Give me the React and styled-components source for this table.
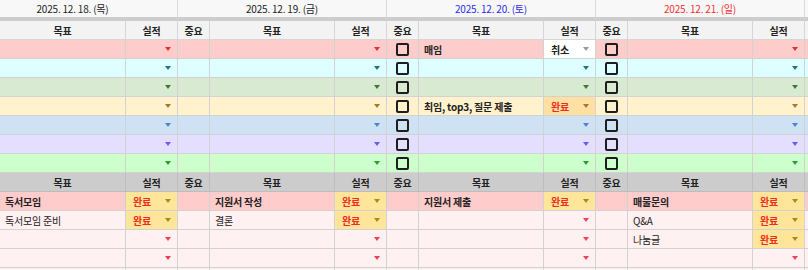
import React from 'react'
import styled, { createGlobalStyle } from 'styled-components'

const GlobalStyle = createGlobalStyle`
  html, body { margin: 0; padding: 0; background: #fff; }
  body { font-family: "Noto Sans CJK KR", "Noto Sans", sans-serif; }
`

const rowColors = [
  { bg: '#ffcccc', arrow: '#e8312f' },
  { bg: '#ddffff', arrow: '#2a7282' },
  { bg: '#d9ead3', arrow: '#3f7a2e' },
  { bg: '#fff2cc', arrow: '#a8782a' },
  { bg: '#cfe2f3', arrow: '#4a86cf' },
  { bg: '#e4dfff', arrow: '#6a5cf0' },
  { bg: '#ccffcc', arrow: '#2f9a35' },
]

// first day is scrolled so its 중요 column is out of view
const days = [
  {
    date: '2025. 12. 18. (목)', color: '#222', check: false, hidden: true,
    top: [],
    bottom: [{ goal: '독서모임', done: true }, { goal: '독서모임 준비', done: true }, {}, {}],
  },
  {
    date: '2025. 12. 19. (금)', color: '#222', check: false,
    top: [],
    bottom: [{ goal: '지원서 작성', done: true }, { goal: '결론', done: true }, {}, {}],
  },
  {
    date: '2025. 12. 20. (토)', color: '#2b2bf0', check: true,
    top: [{ goal: '매임', result: '취소' }, {}, {}, { goal: '최임, top3, 질문 제출', result: '완료' }],
    bottom: [{ goal: '지원서 제출', done: true }, {}, {}, {}],
  },
  {
    date: '2025. 12. 21. (일)', color: '#f03030', check: true,
    top: [],
    bottom: [{ goal: '매물문의', done: true }, { goal: 'Q&A', done: true }, { goal: '나눔글', done: true }, {}],
  },
]

const Viewport = styled.div`
  width: 808px;
  height: 270px;
  overflow: hidden;
`

const Sheet = styled.div`
  display: grid;
  grid-template-columns: 126px 52px repeat(3, 32px 125px 52px) 20px;
  grid-template-rows: 21px repeat(13, 19px) 19px;
  font-size: 10px;
  color: #222;
  letter-spacing: -0.2px;
`

const DateCell = styled.div`
  grid-column: span ${p => p.$span};
  display: flex;
  align-items: center;
  justify-content: center;
  padding-right: ${p => (p.$span === 2 ? '32px' : '0')};
  background: #f8f8f8;
  border-right: 1px solid #dadada;
  border-bottom: 4px solid #cdcdcd;
  box-sizing: border-box;
  color: ${p => p.$color};
  font-size: 10px;
  padding-bottom: 1px;
`

const HeadCell = styled.div`
  display: flex;
  align-items: center;
  justify-content: center;
  font-weight: 700;
  background: ${p => p.$bg};
  border-right: 1px solid ${p => p.$line};
  border-bottom: 1px solid ${p => p.$line};
  box-sizing: border-box;
`

const Cell = styled.div`
  display: flex;
  align-items: center;
  padding-left: 5px;
  background: ${p => p.$bg};
  border-right: 1px solid #d2d2d2;
  border-bottom: 1px solid #d2d2d2;
  box-sizing: border-box;
  font-weight: ${p => (p.$bold ? 700 : 400)};
  white-space: nowrap;
  overflow: hidden;
`

const CheckCell = styled(Cell)`
  justify-content: center;
  padding-left: 0;
`

const Box = styled.span`
  width: 13px;
  height: 13px;
  border: 2px solid #1e1e1e;
  border-radius: 2px;
  box-sizing: border-box;
`

const ResultCell = styled(Cell)`
  padding-left: 7px;
  padding-right: 6px;
  font-weight: 700;
  color: ${p => p.$text};
`

const Arrow = styled.span`
  margin-left: auto;
  width: 0;
  height: 0;
  border-left: 3.5px solid transparent;
  border-right: 3.5px solid transparent;
  border-top: 4px solid ${p => p.$color};
`

const Result = ({ bg, value, arrow }) => {
  if (value === '완료') {
    return (
      <ResultCell $bg={bg} $text="#f22a1c">
        완료<Arrow $color={arrow} />
      </ResultCell>
    )
  }
  if (value === '취소') {
    return (
      <ResultCell $bg="#ffffff" $text="#222">
        취소<Arrow $color="#9a9a9a" />
      </ResultCell>
    )
  }
  return (
    <ResultCell $bg={bg}>
      <Arrow $color={arrow} />
    </ResultCell>
  )
}

const Header = ({ bg, line }) => (
  <>
    {days.map((d, i) => (
      <React.Fragment key={i}>
        {!d.hidden && <HeadCell $bg={bg} $line={line}>중요</HeadCell>}
        <HeadCell $bg={bg} $line={line}>목표</HeadCell>
        <HeadCell $bg={bg} $line={line}>실적</HeadCell>
      </React.Fragment>
    ))}
    <HeadCell $bg={bg} $line={line} />
  </>
)

const App = () => {
  return (
    <>
      <GlobalStyle />
      <Viewport>
        <Sheet>
          {days.map((d, i) => (
            <DateCell key={i} $color={d.color} $span={d.hidden ? 2 : 3}>{d.date}</DateCell>
          ))}
          <DateCell $color="#222" $span={1} />

          <Header bg="#f3f3f3" line="#d6d6d6" />

          {rowColors.map((rc, r) => (
            <React.Fragment key={r}>
              {days.map((d, i) => {
                const item = d.top[r] || {}
                const doneBg = item.result === '완료' ? '#ffe0a3' : rc.bg
                return (
                  <React.Fragment key={i}>
                    {!d.hidden && <CheckCell $bg={rc.bg}>{d.check && <Box />}</CheckCell>}
                    <Cell $bg={rc.bg} $bold>{item.goal}</Cell>
                    <Result bg={doneBg} value={item.result} arrow={rc.arrow} />
                  </React.Fragment>
                )
              })}
              <CheckCell $bg={rc.bg} />
            </React.Fragment>
          ))}

          <Header bg="#cccccc" line="#bdbdbd" />

          {[0, 1, 2, 3].map(r => {
            const bg = r === 0 ? '#ffcccc' : '#fff1f1'
            return (
              <React.Fragment key={r}>
                {days.map((d, i) => {
                  const item = d.bottom[r] || {}
                  return (
                    <React.Fragment key={i}>
                      {!d.hidden && <CheckCell $bg={bg} />}
                      <Cell $bg={bg} $bold={r === 0}>{item.goal}</Cell>
                      <Result
                        bg={item.done ? '#ffe599' : bg}
                        value={item.done ? '완료' : null}
                        arrow={item.done ? '#a88b1c' : '#f0405a'}
                      />
                    </React.Fragment>
                  )
                })}
                <CheckCell $bg={bg} />
              </React.Fragment>
            )
          })}

          {days.map((d, i) => (
            <React.Fragment key={`e${i}`}>
              {!d.hidden && <CheckCell $bg="#fff1f1" />}
              <Cell $bg="#fff1f1" />
              <ResultCell $bg="#fff1f1" />
            </React.Fragment>
          ))}
          <CheckCell $bg="#fff1f1" />
        </Sheet>
      </Viewport>
    </>
  )
}

export default App
